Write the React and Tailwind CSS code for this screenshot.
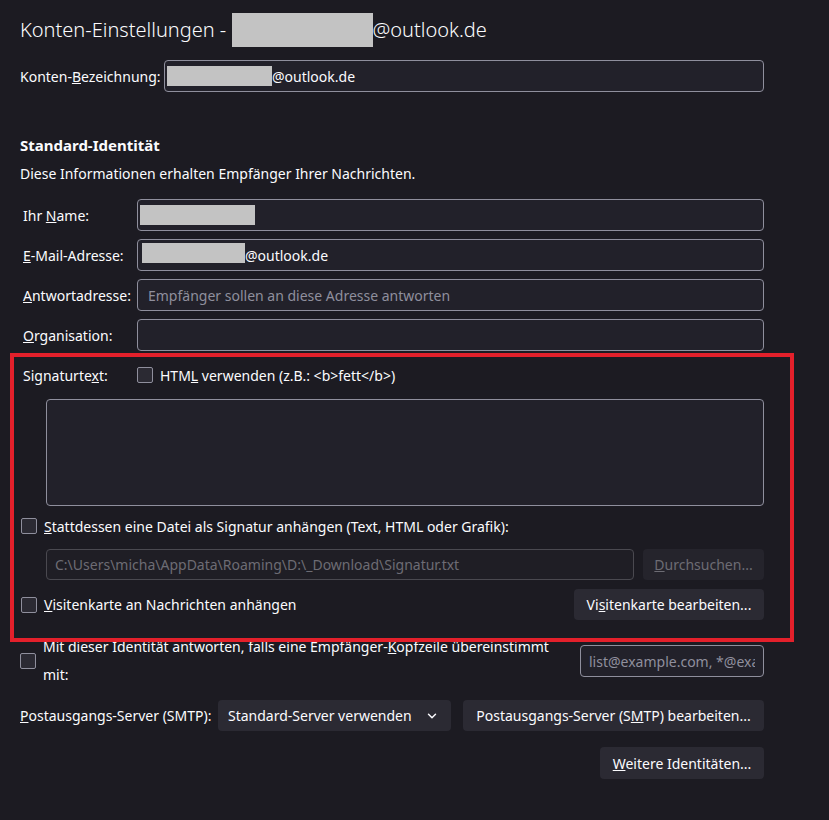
import React from 'react';
import { ChevronDown } from 'lucide-react';

const font = { fontFamily: '"Noto Sans", "Liberation Sans", sans-serif' };

const Redacted = ({ w, h = 20 }) => (
    <span className={`inline-block bg-[#c3c3c3] ${w} ${h === 20 ? 'h-[20px]' : 'h-[34px]'}`}></span>
);

const Field = ({ children, className = '' }) => (
    <div className={`h-[32px] flex items-center rounded-[4px] border border-[#8f8f9d] bg-[#22212a] px-[2px] text-[14px] text-[#fbfbfe] ${className}`}>
        {children}
    </div>
);

const Checkbox = () => (
    <span className="inline-block w-[16px] h-[16px] shrink-0 rounded-[2px] border border-[#8f8f9d] bg-[#2b2a33]"></span>
);

const Button = ({ children, className = '', disabled }) => (
    <button className={`h-[31px] px-[10px] rounded-[4px] text-[14px] ${disabled ? 'bg-[#25242c] text-[#6d6c74]' : 'bg-[#2b2a33] text-[#fbfbfe]'} ${className}`}>
        {children}
    </button>
);

const rows = [
    { label: <>Ihr <u>N</u>ame:</>, content: <Redacted w="w-[115px]" /> },
    { label: <><u>E</u>-Mail-Adresse:</>, content: <><span className="ml-[2px]"><Redacted w="w-[103px]" /></span><span>@outlook.de</span></> },
    { label: <><u>A</u>ntwortadresse:</>, content: <span className="pl-[8px] text-[#8f8f9d]">Empfänger sollen an diese Adresse antworten</span> },
    { label: <><u>O</u>rganisation:</>, content: null },
];

export default function App() {
    return (
        <div style={font} className="relative min-h-screen w-[829px] bg-[#1c1b22] text-[#fbfbfe] text-[14px]">
            <div className="w-[764px] pl-[20px] pt-[13px] pb-[40px]">
                <h1 className="h-[34px] flex items-center text-[20px] font-light">
                    <span>Konten-Einstellungen -&nbsp;</span>
                    <Redacted w="w-[141px]" h={34} />
                    <span>@outlook.de</span>
                </h1>

                <div className="mt-[13px] flex items-center">
                    <span className="w-[144px] shrink-0">Konten-<u>B</u>ezeichnung:</span>
                    <Field className="flex-1">
                        <Redacted w="w-[105px]" />
                        <span>@outlook.de</span>
                    </Field>
                </div>

                <h2 className="mt-[43px] h-[20px] leading-[20px] text-[15px] font-bold">Standard-Identität</h2>
                <p className="mt-[9px] h-[20px] leading-[20px]">Diese Informationen erhalten Empfänger Ihrer Nachrichten.</p>

                <div className="mt-[15px] flex flex-col gap-[8px]">
                    {rows.map((r, i) => (
                        <div key={i} className="flex items-center">
                            <span className="w-[117px] shrink-0 pl-[3px]">{r.label}</span>
                            <Field className="flex-1">{r.content}</Field>
                        </div>
                    ))}
                </div>

                {/* signature block */}
                <div className="mt-[16px] h-[16px] flex items-center">
                    <span className="w-[117px] shrink-0 pl-[3px]">Signaturte<u>x</u>t:</span>
                    <Checkbox />
                    <span className="ml-[7px]">HTM<u>L</u> verwenden (z.B.: &lt;b&gt;fett&lt;/b&gt;)</span>
                </div>
                <div className="mt-[16px] ml-[26px] h-[107px] rounded-[4px] border border-[#8f8f9d] bg-[#22212a]"></div>

                <div className="mt-[12px] h-[16px] flex items-center pl-[1px]">
                    <Checkbox />
                    <span className="ml-[7px]"><u>S</u>tattdessen eine Datei als Signatur anhängen (Text, HTML oder Grafik):</span>
                </div>
                <div className="mt-[15px] ml-[26px] flex items-center gap-[9px]">
                    <div className="flex-1 h-[31px] flex items-center rounded-[4px] border border-[#4a4950] bg-[#1f1e25] px-[8px] text-[#6d6c74]">
                        C:\Users\micha\AppData\Roaming\D:\_Download\Signatur.txt
                    </div>
                    <Button disabled className="w-[121px]"><u>D</u>urchsuchen...</Button>
                </div>

                <div className="mt-[9px] flex items-center pl-[1px]">
                    <Checkbox />
                    <span className="ml-[7px] flex-1"><u>V</u>isitenkarte an Nachrichten anhängen</span>
                    <Button className="w-[190px]">Vi<u>s</u>itenkarte bearbeiten...</Button>
                </div>

                <div className="mt-[13px] flex items-center">
                    <Checkbox />
                    <span className="ml-[7px] w-[520px] leading-[28px]">
                        Mit dieser Identität antworten, falls eine Empfänger-<u>K</u>opfzeile übereinstimmt<br />mit:
                    </span>
                    <div className="ml-auto w-[184px] h-[32px] flex items-center rounded-[4px] border border-[#8f8f9d] bg-[#22212a] pl-[8px] text-[#8f8f9d] overflow-hidden whitespace-nowrap">
                        <span className="block w-[166px] overflow-hidden">list@example.com, *@example.com</span>
                    </div>
                </div>

                <div className="mt-[11px] flex items-center">
                    <span className="w-[198px] shrink-0"><u>P</u>ostausgangs-Server (SMTP):</span>
                    <div className="w-[233px] h-[31px] flex items-center justify-between rounded-[4px] bg-[#2b2a33] pl-[10px] pr-[12px]">
                        <span>Standard-Server verwenden</span>
                        <ChevronDown size={14} strokeWidth={2.5} />
                    </div>
                    <Button className="ml-auto w-[301px]">Postausgangs-Server (S<u>M</u>TP) bearbeiten...</Button>
                </div>

                <div className="mt-[16px] flex justify-end">
                    <Button className="w-[164px] h-[32px]"><u>W</u>eitere Identitäten...</Button>
                </div>
            </div>

            {/* highlight frame around the signature options */}
            <div className="absolute left-[10px] top-[353px] w-[784px] h-[289px] border-4 border-[#e3202b] pointer-events-none"></div>
        </div>
    );
}
